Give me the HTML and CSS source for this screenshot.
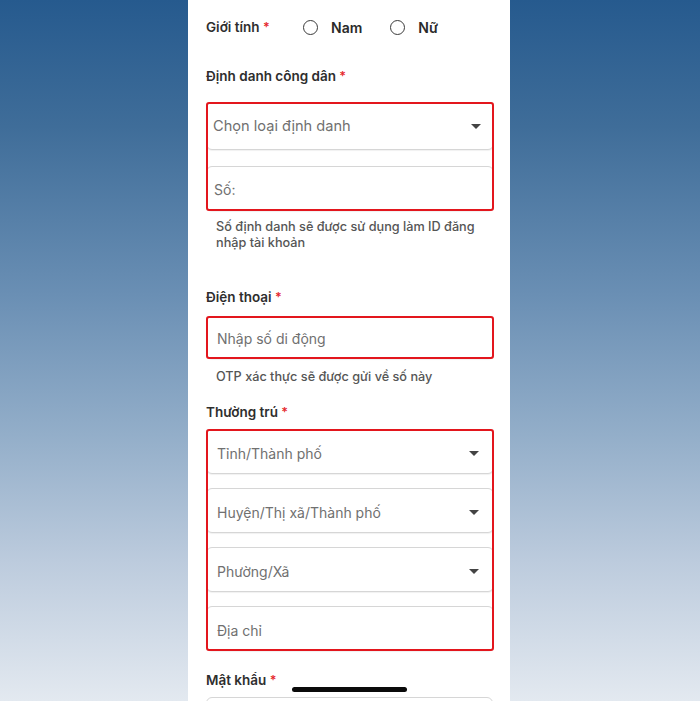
FILE: index.html
```html
<!DOCTYPE html>
<html lang="vi">
<head>
<meta charset="utf-8">
<title>Đăng ký</title>
<link rel="stylesheet" href="styles.css">
</head>
<body>
<div class="phone">
  <div class="gender-row">
    <span class="label gender-label">Giới tính <span class="req">*</span></span>
    <span class="radio"><span class="circle"></span><span class="radio-text">Nam</span></span>
    <span class="radio"><span class="circle"></span><span class="radio-text">Nữ</span></span>
  </div>

  <div class="label lbl-id">Định danh công dân <span class="req">*</span></div>
  <div class="group group-id">
    <div class="field field-select-id"><span class="ph">Chọn loại định danh</span><span class="caret"></span></div>
    <div class="field field-so"><span class="ph">Số:</span></div>
  </div>
  <div class="hint hint-id">Số định danh sẽ được sử dụng làm ID đăng nhập tài khoản</div>

  <div class="label lbl-phone">Điện thoại <span class="req">*</span></div>
  <div class="group group-phone">
    <div class="field field-phone"><span class="ph">Nhập số di động</span></div>
  </div>
  <div class="hint hint-otp">OTP xác thực sẽ được gửi về số này</div>

  <div class="label lbl-addr">Thường trú <span class="req">*</span></div>
  <div class="group group-addr">
    <div class="field field-addr"><span class="ph">Tỉnh/Thành phố</span><span class="caret"></span></div>
    <div class="field field-addr"><span class="ph">Huyện/Thị xã/Thành phố</span><span class="caret"></span></div>
    <div class="field field-addr"><span class="ph">Phường/Xã</span><span class="caret"></span></div>
    <div class="field field-addr"><span class="ph">Địa chỉ</span></div>
  </div>

  <div class="label lbl-pass">Mật khẩu <span class="req">*</span></div>
  <div class="field field-pass"></div>

  <div class="home-indicator"></div>
</div>
</body>
</html>
```

FILE: styles.css
```css
* { box-sizing: border-box; }

html, body {
  margin: 0;
  padding: 0;
}

body {
  height: 701px;
  overflow: hidden;
  font-family: "Inter", "Roboto", "Noto Sans", sans-serif;
  background: linear-gradient(180deg, #265a8e 0%, #3f6d99 18%, #6a8fb4 42%, #93aec9 62%, #bccbdd 80%, #e3e9f0 100%);
  display: flex;
  justify-content: center;
}

.phone {
  position: relative;
  width: 322px;
  height: 701px;
  overflow: hidden;
  background: #ffffff;
  padding: 17px 16px 0 18px;
  margin-left: -2px;
}

.label {
  font-size: 13.5px;
  font-weight: 600;
  color: #2e2e2e;
  height: 20px;
  line-height: 20px;
}

.req {
  color: #e5262b;
  font-size: 12.5px;
}

.gender-row {
  display: flex;
  align-items: center;
  height: 20px;
}

.gender-label {
  width: 97px;
}

.radio {
  display: flex;
  align-items: center;
  margin-right: 28px;
}

.circle {
  width: 15px;
  height: 15px;
  border: 1.6px solid #3a3a3a;
  border-radius: 50%;
  margin-right: 13px;
}

.radio-text {
  font-size: 14px;
  font-weight: 600;
  color: #2a2a2a;
}

.lbl-id { margin-top: 29px; }
.lbl-phone { margin-top: 36px; }
.lbl-addr { margin-top: 17px; }
.lbl-pass { margin-top: 19px; }

.group {
  position: relative;
  display: flex;
  flex-direction: column;
}

.group::after {
  content: "";
  position: absolute;
  inset: 0;
  border: 2px solid #e3161d;
  border-radius: 3px;
  pointer-events: none;
}

.group-id { margin-top: 16px; }
.group-phone { margin-top: 9px; }
.group-addr { margin-top: 7px; gap: 14px; }

.field {
  display: flex;
  align-items: center;
  justify-content: space-between;
  border: 1px solid #d6d6d6;
  border-radius: 6px;
  box-shadow: 0 1px 1px rgba(0, 0, 0, 0.06);
  background: #fff;
}

.ph {
  font-size: 14px;
  color: #707070;
}

.field-select-id {
  height: 48px;
  padding: 0 12px 0 6px;
}

.field-select-id .ph {
  font-size: 14.6px;
}

.field-so {
  height: 45px;
  margin-top: 16px;
  padding: 2px 12px 0 7px;
}

.field-phone {
  height: 43px;
  padding: 2px 12px 0 10px;
}

.field-addr {
  height: 45px;
  padding: 3px 14px 0 10px;
}

.field-pass {
  margin-top: 7px;
  height: 45px;
  margin-right: 1px;
}

.caret {
  width: 0;
  height: 0;
  border-left: 5px solid transparent;
  border-right: 5px solid transparent;
  border-top: 5px solid #444;
}

.hint {
  font-size: 12.7px;
  font-weight: 500;
  color: #555;
  line-height: 16px;
  padding-left: 10px;
}

.hint-id { margin-top: 8px; }
.hint-otp { margin-top: 10px; }

.home-indicator {
  position: absolute;
  left: 104px;
  top: 687px;
  width: 115px;
  height: 5px;
  border-radius: 3px;
  background: #0a0a0a;
}
```
